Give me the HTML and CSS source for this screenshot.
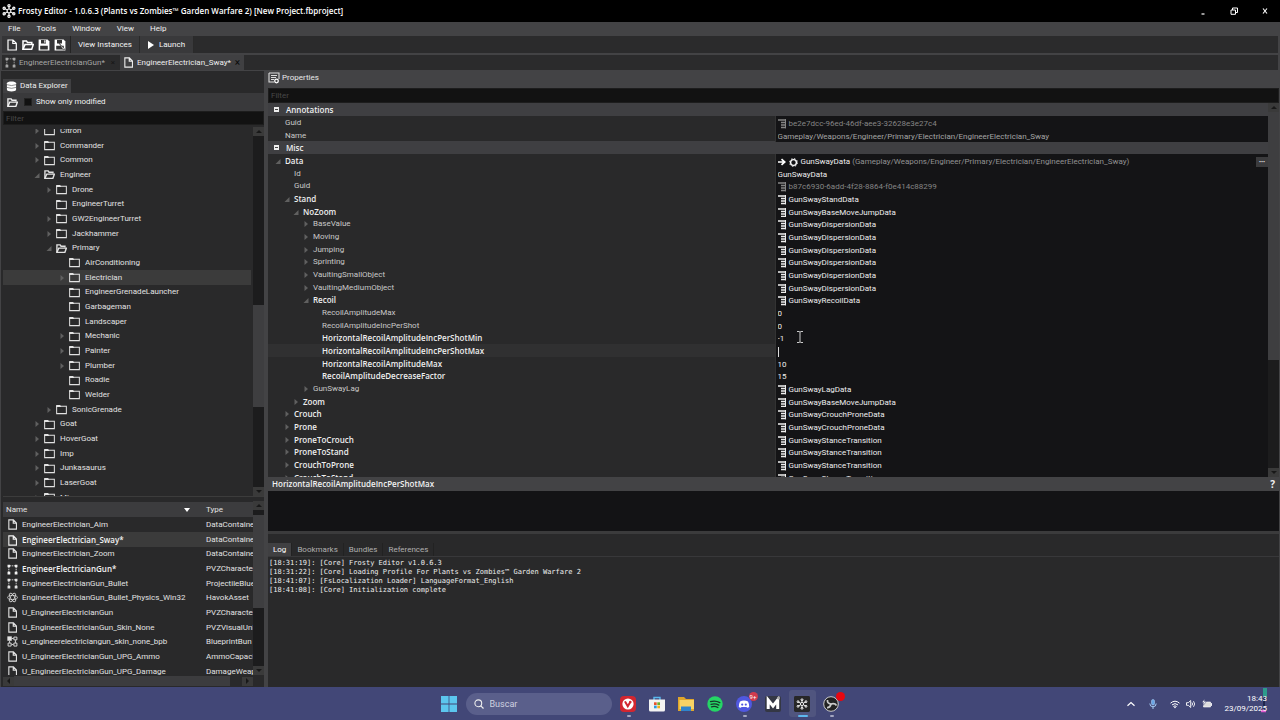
FILE: index.html
```html
<!DOCTYPE html>
<html lang="en">
<head>
<meta charset="utf-8">
<title>Frosty Editor</title>
<link rel="stylesheet" href="styles.css">
</head>
<body>
<svg class="defs" aria-hidden="true">
  <symbol id="snow" viewBox="0 0 16 16"><g fill="none" stroke="currentColor" stroke-width="1.200"><path d="M8 2v4M8 10v4M2.800 5l3.400 2M9.800 9l3.400 2M13.200 5l-3.400 2M6.200 9l-3.400 2"/><circle cx="8" cy="8" r="2.200"/></g><g fill="none" stroke="currentColor" stroke-width="1.300"><circle cx="8" cy="2" r="1.300"/><circle cx="8" cy="14" r="1.300"/><circle cx="2.500" cy="4.800" r="1.300"/><circle cx="13.500" cy="4.800" r="1.300"/><circle cx="2.500" cy="11.200" r="1.300"/><circle cx="13.500" cy="11.200" r="1.300"/></g></symbol>
  <symbol id="file" viewBox="0 0 12 12"><path d="M2 1h5l3.300 3.300V11H2zM6.800 1v3.500h3.500" fill="none" stroke="currentColor" stroke-width="1.200"/></symbol>
  <symbol id="folder" viewBox="0 0 12 12"><path d="M.7 2.500h10.600v8H.7z" fill="none" stroke="currentColor" stroke-width="1.100"/><path d="M.2 1.200h4.300l1.300 2H.2z" fill="currentColor"/></symbol>
  <symbol id="open" viewBox="0 0 12 12"><path d="M1 10V2h3.500l1 1.500h4.300V5" fill="none" stroke="currentColor" stroke-width="1.500"/><path d="M1 10.200l2-4.600h8.300l-1.600 4.600z" fill="none" stroke="currentColor" stroke-width="1.500"/></symbol>
  <symbol id="save" viewBox="0 0 12 12"><path d="M.6.600h9l1.800 1.800v9H.6z" fill="currentColor"/><path d="M3 1h5v3.500H3zM2.200 6.800h7.600v3.600H2.200z" fill="#333"/><path d="M6.300 1.300h1.200v2.500H6.300z" fill="currentColor"/></symbol>
  <symbol id="saveas" viewBox="0 0 12 12"><path d="M.6.600h9l1.800 1.800v9H.6z" fill="currentColor"/><path d="M3 1h5v3.500H3zM2.200 6.800h7.600v3.600H2.200z" fill="#333"/><path d="M5 4l6 6.500-2 .2z" fill="currentColor" stroke="#333" stroke-width=".6"/></symbol>
  <symbol id="nodes" viewBox="0 0 12 12"><path d="M2 3v6M10 3v6M3 2h6" stroke="currentColor" stroke-width=".9" stroke-dasharray="1.500 .7"/><path d="M.6.800h2.800v2.800H.6zM8.600.800h2.800v2.800H8.600zM.6 8.400h3v3h-3zM8.400 8.400h3v3h-3z" fill="currentColor"/></symbol>
  <symbol id="bundle" viewBox="0 0 12 12"><path d="M.4.400h4.800v4.800H.4z" fill="currentColor"/><path d="M7.500 1.200h3.300v3H7.500zM1.200 7.700h3.300v3.300H1.200zM7.500 7.700h3.300v3.300H7.500zM5.200 2.700h2M9.200 4.500v3M2.800 5.500v2M5 9.300h2" fill="none" stroke="currentColor"/></symbol>
  <symbol id="atom" viewBox="0 0 12 12"><g fill="none" stroke="currentColor" stroke-width=".8"><ellipse cx="6" cy="6" rx="5.400" ry="2.200"/><ellipse cx="6" cy="6" rx="5.400" ry="2.200" transform="rotate(60 6 6)"/><ellipse cx="6" cy="6" rx="5.400" ry="2.200" transform="rotate(120 6 6)"/></g></symbol>
  <symbol id="struct" viewBox="0 0 9 11"><path d="M0 1h8M3 3.500h5M3 6h5M3 8.500h5" stroke="currentColor" stroke-width="1.500"/><path d="M7.500 0v9.300" stroke="currentColor" stroke-width="1"/></symbol>
  <symbol id="right" viewBox="0 0 6 8"><path d="M1.500 1L5 4 1.500 7z" fill="currentColor"/></symbol>
  <symbol id="down" viewBox="0 0 6 8"><path d="M5.500 2v5H.5z" fill="currentColor"/></symbol>
</svg>

<header class="titlebar">
  <svg class="i14"><use href="#snow"/></svg>
  <h1>Frosty Editor - 1.0.6.3 (Plants vs Zombies™ Garden Warfare 2) [New Project.fbproject]</h1>
  <div class="winbtns">
    <button aria-label="Minimize"><svg viewBox="0 0 8 8"><path d="M2.500 7h3" stroke="#fff" stroke-width="1.200"/></svg></button>
    <button aria-label="Restore"><svg viewBox="0 0 8 8"><path d="M1 3h4.500v4.300H1zM2.500 3V1h5v4.500h-2" fill="none" stroke="#fff" stroke-width="1"/></svg></button>
    <button aria-label="Close"><svg viewBox="0 0 8 8"><path d="M2 1.500l4 5M6 1.500l-4 5" stroke="#fff" stroke-width="1.100"/></svg></button>
  </div>
</header>

<main class="app">
  <nav class="menubar"><button>File</button><button>Tools</button><button>Window</button><button>View</button><button>Help</button></nav>

  <div class="toolbar">
    <div class="tools">
      <button aria-label="New"><svg class="i12"><use href="#file"/></svg></button>
      <button aria-label="Open"><svg class="i12"><use href="#open"/></svg></button>
      <button aria-label="Save"><svg class="i12"><use href="#save"/></svg></button>
      <button aria-label="Save as"><svg class="i12"><use href="#saveas"/></svg></button>
    </div>
    <button class="tool wide">View Instances</button>
    <button class="tool launch"><svg class="play" viewBox="0 0 6 8"><path d="M0 0l6 4-6 4z" fill="#fff"/></svg>Launch</button>
  </div>

  <div class="doctabs">
    <div class="doctab"><svg class="i11"><use href="#nodes"/></svg><span>EngineerElectricianGun*</span><button aria-label="Close tab">×</button></div>
    <div class="doctab active"><svg class="i11"><use href="#file"/></svg><span>EngineerElectrician_Sway*</span><button aria-label="Close tab">×</button></div>
  </div>

  <div class="work">
    <aside class="left">
      <div class="paneltab"><svg class="i11" viewBox="0 0 12 12"><path d="M1 2.500C1 0 11 0 11 2.500v7C11 12 1 12 1 9.500z" fill="#fff"/><path d="M1 4q5 2 10 0M1 7q5 2 10 0" fill="none" stroke="#555" stroke-width=".7"/></svg>Data Explorer</div>
      <div class="opts">
        <svg class="i11"><use href="#open"/></svg>
        <label><input type="checkbox">Show only modified</label>
      </div>
      <input class="filter" placeholder="Filter" aria-label="Filter assets">
      <div class="treewrap">
        <div class="view">
          <ul class="tree">
            <li class="t0"><svg class="ar"><use href="#right"/></svg><svg class="i11"><use href="#folder"/></svg>Citron</li>
            <li class="t0"><svg class="ar"><use href="#right"/></svg><svg class="i11"><use href="#folder"/></svg>Commander</li>
            <li class="t0"><svg class="ar"><use href="#right"/></svg><svg class="i11"><use href="#folder"/></svg>Common</li>
            <li class="t0"><svg class="ar"><use href="#down"/></svg><svg class="i11"><use href="#open"/></svg>Engineer</li>
            <li class="t1"><svg class="ar"><use href="#right"/></svg><svg class="i11"><use href="#folder"/></svg>Drone</li>
            <li class="t1"><svg class="ar"></svg><svg class="i11"><use href="#folder"/></svg>EngineerTurret</li>
            <li class="t1"><svg class="ar"><use href="#right"/></svg><svg class="i11"><use href="#folder"/></svg>GW2EngineerTurret</li>
            <li class="t1"><svg class="ar"><use href="#right"/></svg><svg class="i11"><use href="#folder"/></svg>Jackhammer</li>
            <li class="t1"><svg class="ar"><use href="#down"/></svg><svg class="i11"><use href="#open"/></svg>Primary</li>
            <li class="t2"><svg class="ar"></svg><svg class="i11"><use href="#folder"/></svg>AirConditioning</li>
            <li class="t2 sel"><svg class="ar"><use href="#right"/></svg><svg class="i11"><use href="#folder"/></svg>Electrician</li>
            <li class="t2"><svg class="ar"></svg><svg class="i11"><use href="#folder"/></svg>EngineerGrenadeLauncher</li>
            <li class="t2"><svg class="ar"></svg><svg class="i11"><use href="#folder"/></svg>Garbageman</li>
            <li class="t2"><svg class="ar"></svg><svg class="i11"><use href="#folder"/></svg>Landscaper</li>
            <li class="t2"><svg class="ar"><use href="#right"/></svg><svg class="i11"><use href="#folder"/></svg>Mechanic</li>
            <li class="t2"><svg class="ar"><use href="#right"/></svg><svg class="i11"><use href="#folder"/></svg>Painter</li>
            <li class="t2"><svg class="ar"><use href="#right"/></svg><svg class="i11"><use href="#folder"/></svg>Plumber</li>
            <li class="t2"><svg class="ar"></svg><svg class="i11"><use href="#folder"/></svg>Roadie</li>
            <li class="t2"><svg class="ar"></svg><svg class="i11"><use href="#folder"/></svg>Welder</li>
            <li class="t1"><svg class="ar"><use href="#right"/></svg><svg class="i11"><use href="#folder"/></svg>SonicGrenade</li>
            <li class="t0"><svg class="ar"><use href="#right"/></svg><svg class="i11"><use href="#folder"/></svg>Goat</li>
            <li class="t0"><svg class="ar"><use href="#right"/></svg><svg class="i11"><use href="#folder"/></svg>HoverGoat</li>
            <li class="t0"><svg class="ar"><use href="#right"/></svg><svg class="i11"><use href="#folder"/></svg>Imp</li>
            <li class="t0"><svg class="ar"><use href="#right"/></svg><svg class="i11"><use href="#folder"/></svg>Junkasaurus</li>
            <li class="t0"><svg class="ar"><use href="#right"/></svg><svg class="i11"><use href="#folder"/></svg>LaserGoat</li>
            <li class="t0"><svg class="ar"><use href="#right"/></svg><svg class="i11"><use href="#folder"/></svg>Mi</li>
          </ul>
        </div>
        <div class="vbar"><i class="up"></i><div class="track treetrack"><b></b></div><i class="dn"></i></div>
      </div>
      <div class="listwrap">
        <div class="view">
          <table class="assets">
            <thead><tr><th>Name<svg class="sort" viewBox="0 0 6 4"><path d="M0 0h6L3 4z" fill="#fff"/></svg></th><th>Type</th></tr></thead>
            <tbody>
              <tr><td><svg class="i11"><use href="#file"/></svg>EngineerElectrician_Aim</td><td>DataContainer</td></tr>
              <tr class="sel"><td class="b"><svg class="i11"><use href="#file"/></svg>EngineerElectrician_Sway*</td><td>DataContainer</td></tr>
              <tr><td><svg class="i11"><use href="#file"/></svg>EngineerElectrician_Zoom</td><td>DataContainer</td></tr>
              <tr><td class="b"><svg class="i11"><use href="#nodes"/></svg>EngineerElectricianGun*</td><td>PVZCharacter</td></tr>
              <tr><td><svg class="i11"><use href="#nodes"/></svg>EngineerElectricianGun_Bullet</td><td>ProjectileBlue</td></tr>
              <tr><td><svg class="i11"><use href="#atom"/></svg>EngineerElectricianGun_Bullet_Physics_Win32</td><td>HavokAsset</td></tr>
              <tr><td><svg class="i11"><use href="#file"/></svg>U_EngineerElectricianGun</td><td>PVZCharacter</td></tr>
              <tr><td><svg class="i11"><use href="#file"/></svg>U_EngineerElectricianGun_Skin_None</td><td>PVZVisualUnl</td></tr>
              <tr><td><svg class="i11"><use href="#bundle"/></svg>u_engineerelectriciangun_skin_none_bpb</td><td>BlueprintBun</td></tr>
              <tr><td><svg class="i11"><use href="#file"/></svg>U_EngineerElectricianGun_UPG_Ammo</td><td>AmmoCapaci</td></tr>
              <tr><td><svg class="i11"><use href="#file"/></svg>U_EngineerElectricianGun_UPG_Damage</td><td>DamageWeap</td></tr>
            </tbody>
          </table>
        </div>
        <div class="vbar"><i class="up"></i><div class="track listtrack"><b></b></div><i class="dn"></i></div>
      </div>
      <div class="hbar"><i class="lt"></i><b></b><i class="rt"></i></div>
    </aside>

    <section class="right">
      <h2 class="prophead"><svg class="i12" viewBox="0 0 12 12"><path d="M1 1h10v6M1 1v9h5M3 3.500h6M3 5.500h5M3 7.500h3" fill="none" stroke="#ddd" stroke-width="1.100"/><circle cx="8.500" cy="9" r="1.800" fill="none" stroke="#fff" stroke-width="1.300"/></svg>Properties</h2>
      <input class="filter" placeholder="Filter" aria-label="Filter properties">
      <div class="propwrap">
        <div class="view">
          <div class="props">
            <div class="row cat"><span class="box"></span><span>Annotations</span></div>
            <div class="row"><label class="p0"><svg class="ar"></svg>Guid</label><div class="val dim"><svg class="st"><use href="#struct"/></svg>be2e7dcc-96ed-46df-aee3-32628e3e27c4</div></div>
            <div class="row"><label class="p0" for="name"><svg class="ar"></svg>Name</label><div class="val soft"><input id="name" value="Gameplay/Weapons/Engineer/Primary/Electrician/EngineerElectrician_Sway"></div></div>
            <div class="row cat"><span class="box"></span><span>Misc</span></div>
            <div class="row b"><label class="p0"><svg class="ar"><use href="#down"/></svg>Data</label><div class="val ref"><svg class="i8" viewBox="0 0 8 8"><path d="M0 4h6M3.500 1.200L6.800 4 3.500 6.800" fill="none" stroke="#fff" stroke-width="1.700"/></svg><svg class="i9" viewBox="0 0 10 10"><circle cx="5" cy="5" r="3.200" fill="none" stroke="#fff" stroke-width="1.500"/><circle cx="5" cy="5" r="4.400" fill="none" stroke="#fff" stroke-width="1" stroke-dasharray="1.700 1.750"/></svg><span>GunSwayData <em>(Gameplay/Weapons/Engineer/Primary/Electrician/EngineerElectrician_Sway)</em></span><button class="more" aria-label="More">•••</button></div></div>
            <div class="row"><label class="p1" for="pid"><svg class="ar"></svg>Id</label><div class="val"><input id="pid" value="GunSwayData"></div></div>
            <div class="row"><label class="p1"><svg class="ar"></svg>Guid</label><div class="val dim"><svg class="st"><use href="#struct"/></svg>b87c6930-6add-4f28-8864-f0e414c88299</div></div>
            <div class="row b"><label class="p1"><svg class="ar"><use href="#down"/></svg>Stand</label><div class="val"><svg class="st"><use href="#struct"/></svg>GunSwayStandData</div></div>
            <div class="row b"><label class="p2"><svg class="ar"><use href="#down"/></svg>NoZoom</label><div class="val"><svg class="st"><use href="#struct"/></svg>GunSwayBaseMoveJumpData</div></div>
            <div class="row"><label class="p3"><svg class="ar"><use href="#right"/></svg>BaseValue</label><div class="val"><svg class="st"><use href="#struct"/></svg>GunSwayDispersionData</div></div>
            <div class="row"><label class="p3"><svg class="ar"><use href="#right"/></svg>Moving</label><div class="val"><svg class="st"><use href="#struct"/></svg>GunSwayDispersionData</div></div>
            <div class="row"><label class="p3"><svg class="ar"><use href="#right"/></svg>Jumping</label><div class="val"><svg class="st"><use href="#struct"/></svg>GunSwayDispersionData</div></div>
            <div class="row"><label class="p3"><svg class="ar"><use href="#right"/></svg>Sprinting</label><div class="val"><svg class="st"><use href="#struct"/></svg>GunSwayDispersionData</div></div>
            <div class="row"><label class="p3"><svg class="ar"><use href="#right"/></svg>VaultingSmallObject</label><div class="val"><svg class="st"><use href="#struct"/></svg>GunSwayDispersionData</div></div>
            <div class="row"><label class="p3"><svg class="ar"><use href="#right"/></svg>VaultingMediumObject</label><div class="val"><svg class="st"><use href="#struct"/></svg>GunSwayDispersionData</div></div>
            <div class="row b"><label class="p3"><svg class="ar"><use href="#down"/></svg>Recoil</label><div class="val"><svg class="st"><use href="#struct"/></svg>GunSwayRecoilData</div></div>
            <div class="row"><label class="p4" for="r1"><svg class="ar"></svg>RecoilAmplitudeMax</label><div class="val"><input id="r1" value="0"></div></div>
            <div class="row"><label class="p4" for="r2"><svg class="ar"></svg>RecoilAmplitudeIncPerShot</label><div class="val"><input id="r2" value="0"></div></div>
            <div class="row b"><label class="p4" for="r3"><svg class="ar"></svg>HorizontalRecoilAmplitudeIncPerShotMin</label><div class="val"><input id="r3" value="-1"><svg class="ibeam" viewBox="0 0 8 14"><path d="M1 1.500h2.200L4 2.200l.8-.7H7M1 12.500h2.200l.8-.7.800.700H7M4 2v10" fill="none" stroke="#ccc"/></svg></div></div>
            <div class="row b cur"><label class="p4" for="r4"><svg class="ar"></svg>HorizontalRecoilAmplitudeIncPerShotMax</label><div class="val"><span class="caret"></span><input id="r4" value=""></div></div>
            <div class="row b"><label class="p4" for="r5"><svg class="ar"></svg>HorizontalRecoilAmplitudeMax</label><div class="val"><input id="r5" value="10"></div></div>
            <div class="row b"><label class="p4" for="r6"><svg class="ar"></svg>RecoilAmplitudeDecreaseFactor</label><div class="val"><input id="r6" value="15"></div></div>
            <div class="row"><label class="p3"><svg class="ar"><use href="#right"/></svg>GunSwayLag</label><div class="val"><svg class="st"><use href="#struct"/></svg>GunSwayLagData</div></div>
            <div class="row b"><label class="p2"><svg class="ar"><use href="#right"/></svg>Zoom</label><div class="val"><svg class="st"><use href="#struct"/></svg>GunSwayBaseMoveJumpData</div></div>
            <div class="row b"><label class="p1"><svg class="ar"><use href="#right"/></svg>Crouch</label><div class="val"><svg class="st"><use href="#struct"/></svg>GunSwayCrouchProneData</div></div>
            <div class="row b"><label class="p1"><svg class="ar"><use href="#right"/></svg>Prone</label><div class="val"><svg class="st"><use href="#struct"/></svg>GunSwayCrouchProneData</div></div>
            <div class="row b"><label class="p1"><svg class="ar"><use href="#right"/></svg>ProneToCrouch</label><div class="val"><svg class="st"><use href="#struct"/></svg>GunSwayStanceTransition</div></div>
            <div class="row b"><label class="p1"><svg class="ar"><use href="#right"/></svg>ProneToStand</label><div class="val"><svg class="st"><use href="#struct"/></svg>GunSwayStanceTransition</div></div>
            <div class="row b"><label class="p1"><svg class="ar"><use href="#right"/></svg>CrouchToProne</label><div class="val"><svg class="st"><use href="#struct"/></svg>GunSwayStanceTransition</div></div>
            <div class="row b"><label class="p1"><svg class="ar"><use href="#right"/></svg>CrouchToStand</label><div class="val"><svg class="st"><use href="#struct"/></svg>GunSwayStanceTransition</div></div>
          </div>
        </div>
        <div class="vbar"><i class="up"></i><div class="track proptrack"><b></b></div><i class="dn"></i></div>
      </div>
      <div class="helphead"><span>HorizontalRecoilAmplitudeIncPerShotMax</span><button aria-label="Help">?</button></div>
      <div class="helpbody"></div>
      <div class="logtabs"><button class="on">Log</button><button>Bookmarks</button><button>Bundles</button><button>References</button></div>
      <pre class="log">[18:31:19]: [Core] Frosty Editor v1.0.6.3
[18:31:22]: [Core] Loading Profile For Plants vs Zombies™ Garden Warfare 2
[18:41:07]: [FsLocalization Loader] LanguageFormat_English
[18:41:08]: [Core] Initialization complete</pre>
    </section>
  </div>
</main>

<footer class="taskbar">
  <div class="apps">
    <button aria-label="Start"><svg class="i16" viewBox="0 0 16 16"><path d="M0 0h7.600v7.600H0zM8.400 0H16v7.600H8.400zM0 8.400h7.600V16H0zM8.400 8.400H16V16H8.400z" fill="#5cc6ee"/></svg></button>
    <label class="search"><svg class="i10" viewBox="0 0 10 10"><circle cx="4.300" cy="4.300" r="3.400" fill="none" stroke="#eee" stroke-width="1.100"/><path d="M6.800 6.800l2.700 2.700" stroke="#eee" stroke-width="1.200"/></svg><input placeholder="Buscar" aria-label="Buscar"></label>
    <button class="run" aria-label="Vivaldi"><svg class="i16" viewBox="0 0 16 16"><rect width="16" height="16" rx="4" fill="#d22630"/><circle cx="8" cy="8" r="5.600" fill="#fff"/><path d="M5.300 6l2.500 4.300L10 6.500" fill="none" stroke="#d22630" stroke-width="2" stroke-linecap="round"/><circle cx="10.300" cy="6" r="1.300" fill="#d22630"/></svg></button>
    <button aria-label="Store"><svg class="i16" viewBox="0 0 16 16"><path d="M5 4V1.500h6V4" fill="none" stroke="#59b8ee" stroke-width="1.400"/><path d="M0 3.500h16V14q0 1.500-1.500 1.500h-13Q0 15.500 0 14z" fill="#f3f3f3"/><path d="M5 6.300h2.700V9H5z" fill="#e8522c"/><path d="M8.300 6.300H11V9H8.300z" fill="#6fae2b"/><path d="M5 9.600h2.700v2.700H5z" fill="#2a9be0"/><path d="M8.300 9.600H11v2.700H8.300z" fill="#f2b21e"/></svg></button>
    <button aria-label="Files"><svg class="i16" viewBox="0 0 16 16"><path d="M0 1h6l2 2h8v12H0z" fill="#dfa52b"/><path d="M1.500 4H16v9H1.500z" fill="#f7d265"/><path d="M3 10.500h10V15H3z" fill="#2f84cc"/></svg></button>
    <button aria-label="Spotify"><svg class="i16" viewBox="0 0 16 16"><circle cx="8" cy="8" r="7.700" fill="#25d565"/><path d="M3.500 5.600q5-1.500 9.300 1M4 8.300q4.300-1.200 7.800.8M4.500 10.800q3.500-1 6.400.7" fill="none" stroke="#17352a" stroke-width="1.300" stroke-linecap="round"/></svg></button>
    <button class="run" aria-label="Discord"><svg class="i16" viewBox="0 0 16 16"><circle cx="8" cy="8" r="8" fill="#5058e0"/><path d="M4 5.500q4-1.800 8 0 1.500 3 1.200 5.500-2 1.300-2.700 0h-5q-.7 1.300-2.700 0Q2.600 8.500 4 5.500z" fill="#fff"/><circle cx="6.200" cy="8.600" r="1.100" fill="#5058e0"/><circle cx="9.800" cy="8.600" r="1.100" fill="#5058e0"/></svg><span class="badge">9+</span></button>
    <button aria-label="Modrinth"><svg class="i16" viewBox="0 0 16 16"><rect width="16" height="16" rx="2" fill="#343744"/><path d="M3.200 13V4L8 10l4.700-6v9" fill="none" stroke="#fff" stroke-width="3"/><circle cx="13.500" cy="2" r="1.500" fill="#aaa"/></svg></button>
    <button class="run here" aria-label="Frosty Editor"><svg class="i16" viewBox="0 0 22 22"><rect width="22" height="22" rx="2" fill="#272727"/><use href="#snow" x="3" y="3" width="16" height="16"/></svg></button>
    <button class="run" aria-label="OBS"><svg class="i16" viewBox="0 0 16 16"><circle cx="8" cy="8" r="7.300" fill="#222" stroke="#ccc" stroke-width="1"/><path d="M8 8Q4 7.500 4.500 4M8 8q4-1 5.500 1.500M8 8q-1 4-4 3.700" fill="none" stroke="#ccc" stroke-width="1.700"/></svg><span class="badge dot"></span></button>
  </div>
  <div class="tray">
    <svg class="glint" viewBox="0 0 10 26"><path d="M4 0h4v9H4z" fill="#2d9b8c"/><path d="M5 8v14" stroke="#151b3c" stroke-width="1.500"/><path d="M2 23h5" stroke="#e05bd0" stroke-width="2.500"/></svg>
    <svg class="i10" viewBox="0 0 10 10"><path d="M1.500 6.800L5 3.500l3.500 3.300" fill="none" stroke="#fff" stroke-width="1.200"/></svg>
    <svg class="i10 mic" viewBox="0 0 10 10"><rect x="3.500" y=".5" width="3" height="5.500" rx="1.500" fill="#6aa5e6" stroke="#a6cbf4" stroke-width=".6"/><path d="M1.800 4.500q0 3.300 3.200 3.300t3.200-3.300M5 7.800V10" fill="none" stroke="#a6cbf4"/></svg>
    <svg class="i10" viewBox="0 0 10 10"><path d="M.5 4.200q4.500-4 9 0M2 5.900q3-2.600 6 0M3.400 7.500q1.600-1.300 3.200 0" fill="none" stroke="#fff" stroke-width="1"/><circle cx="5" cy="8.500" r=".8" fill="#fff"/></svg>
    <svg class="i10" viewBox="0 0 10 10"><path d="M.5 3.700h1.800L4.700 1.500v7L2.300 6.300H.5zM6 3.500q1.200 1.500 0 3M7.500 2.200q2.300 2.800 0 5.600" fill="none" stroke="#fff" stroke-width=".9"/></svg>
    <svg class="i10" viewBox="0 0 10 10"><path d="M1.500 3h7v5h-7zM9 4.500h1v2H9z" fill="#ddd" stroke="#fff" stroke-width=".6"/><path d="M2.500 0L0 3.500h2L1 6.500l3.500-4h-2z" fill="#fff" stroke="#424777" stroke-width=".5"/></svg>
    <time>18:43<br>23/09/2025</time>
  </div>
</footer>
</body>
</html>
```

FILE: styles.css
```css
* { box-sizing: border-box; }
body { margin: 0; height: 100vh; display: flex; flex-direction: column; overflow: hidden; background: #2a2a2a; color: #dedede; font: 8px/12px Roboto, "Open Sans", sans-serif; }
button, input { font: inherit; color: inherit; background: none; border: 0; padding: 0; margin: 0; outline: 0; }
button { display: flex; align-items: center; justify-content: center; white-space: nowrap; }
h1, h2, ul, pre { margin: 0; padding: 0; }
svg { flex: none; display: block; }
.defs { position: absolute; width: 0; height: 0; }
.i8 { width: 8px; height: 8px; }
.i9 { width: 9px; height: 9px; }
.i10 { width: 10px; height: 10px; }
.i11 { width: 11px; height: 11px; }
.i12 { width: 12px; height: 12px; }
.i14 { width: 14px; height: 14px; }
.i16 { width: 16px; height: 16px; }

.titlebar { flex: none; height: 22px; background: #000; color: #fff; display: flex; align-items: center; padding: 0 7px 0 2px; gap: 2px; }
.titlebar h1 { font: 600 8px/12px "Open Sans", sans-serif; flex: 1; white-space: nowrap; }
.winbtns { display: flex; gap: 15px; }
.winbtns button { width: 16px; height: 16px; }
.winbtns svg { width: 8px; height: 8px; }

.app { flex: 1; min-height: 0; display: flex; flex-direction: column; background: #434345; color: #e2e2e2; }
.menubar { flex: none; height: 14px; display: flex; padding-left: 8px; gap: 16px; color: #f0f0f0; }
.toolbar { flex: none; height: 17px; margin: 0 2px; background: #2b2b2c; display: flex; }
.tools { display: flex; gap: 4px; padding: 0 4px; background: #353537; border-right: 1px solid #242424; color: #fff; }
.tool { background: #39393b; border-right: 1px solid #2a2a2a; color: #f4f4f4; }
.wide { width: 69px; }
.launch { width: 54px; gap: 5px; }
.play { width: 6px; height: 8px; }
.doctabs { flex: none; height: 15px; margin: 2px 2px 0; background: #2b2b2c; display: flex; }
.doctab { width: 118px; display: flex; align-items: center; gap: 3px; padding: 0 3px; color: #a5a5a5; }
.doctab span { flex: 1; white-space: nowrap; }
.doctab button { width: 8px; color: #161616; }
.doctab.active { width: 124px; background: #404042; color: #eee; }
.doctab.active button { color: #090909; font-size: 10px; }

.work { flex: 1; min-height: 0; display: grid; grid-template-columns: 263px 1fr; column-gap: 4px; padding: 0 1px; }
.left { min-height: 0; display: flex; flex-direction: column; background: #29292a; padding: 8px 0 0 2px; margin-top: 1px; }
.paneltab { flex: none; align-self: flex-start; width: 68px; height: 14px; background: #404042; display: flex; align-items: center; gap: 3px; padding-left: 3px; white-space: nowrap; color: #eee; }
.opts { flex: none; height: 18px; background: #39393b; display: flex; align-items: center; gap: 6px; padding-left: 4px; color: #f0f0f0; }
.opts label { display: flex; align-items: center; gap: 4px; }
.opts input { appearance: none; width: 8px; height: 8px; background: #111; border: 1px solid #222; }
.filter { flex: none; height: 14px; background: #121212; border: 1px solid #1d1d1d; padding: 0 2px; width: 100%; }
.filter::placeholder { color: #484848; opacity: 1; }
.view { flex: 1; min-width: 0; overflow: hidden; }
.treewrap { flex: 1; min-height: 0; display: flex; padding-top: 2px; border-bottom: 1px solid #3c3c3c; }
.treewrap .view { margin-top: 2px; }
.tree { list-style: none; margin: -6px 2px 0 0; }
.tree li { height: 15px; display: flex; align-items: center; white-space: nowrap; }
.tree li:nth-child(3n) { height: 14px; }
.ar { width: 6px; height: 8px; color: #606060; margin-right: 4px; }
.tree .i11 { margin-right: 5px; }
.t0 { padding-left: 31px; }
.t1 { padding-left: 43px; }
.t2 { padding-left: 56px; }
.sel { background: #3b3b3b; }

.vbar { flex: none; width: 11px; display: flex; flex-direction: column; background: #1c1c1d; }
.vbar i, .hbar i { flex: none; width: 11px; height: 9px; background: #3a3a3a; display: flex; align-items: center; justify-content: center; }
.vbar i::after, .hbar i::after { content: ""; border: 3px solid transparent; }
.up::after { border-bottom-color: #181818 !important; border-top: 0 !important; }
.dn::after { border-top-color: #181818 !important; border-bottom: 0 !important; }
.lt::after { border-right-color: #181818 !important; border-left: 0 !important; }
.rt::after { border-left-color: #181818 !important; border-right: 0 !important; }
.track { flex: 1; display: grid; }
.track b { grid-row: 2; background: #3e3e40; }
.treetrack { grid-template-rows: 169fr 101fr 80fr; }
.listtrack { grid-template-rows: 5fr 94fr 58fr; }
.proptrack { grid-template-rows: 0fr 247fr 108fr; }

.listwrap { flex: none; height: 174px; display: flex; margin-top: 4px; }
.listwrap .view { padding-top: 1px; }
.assets { border-collapse: collapse; table-layout: fixed; width: 100%; }
.assets th { height: 15px; background: #3c3c3e; text-align: left; font-weight: 400; padding: 0 3px; }
.assets th:first-child { width: 200px; }
.sort { width: 6px; height: 4px; float: right; margin: 4px 10px 0 0; }
.assets td { height: 15px; padding: 0 1px 0 3px; white-space: nowrap; overflow: hidden; line-height: 14px; }
.assets td:nth-child(2) { padding-left: 3px; }
.assets tr:nth-child(3n) td { height: 14px; }
.assets td .i11 { display: inline-block; vertical-align: middle; margin: 0 4px 0 1px; }
.b, .b label, .cat, .helphead { font-family: "Open Sans", sans-serif; font-weight: 600; color: #f2f2f2; }
.hbar { flex: none; height: 12px; display: flex; align-items: center; padding-right: 11px; background: #29292a; }
.hbar b { width: 216px; height: 10px; background: #3c3c3e; margin-right: auto; }

.right { min-width: 0; min-height: 0; display: flex; flex-direction: column; background: #29292a; }
.prophead { flex: none; height: 18px; background: #434345; font-size: 8px; font-weight: 400; display: flex; align-items: center; gap: 2px; padding-bottom: 2px; color: #e8e8e8; }
.right > .filter { height: 15px; }
.propwrap { flex: 1; min-height: 0; display: flex; }
.row { height: 13px; display: grid; grid-template-columns: 507fr 492fr; }
.row:nth-child(3n) { height: 12px; }
.row label { display: flex; align-items: center; white-space: nowrap; color: #c8c8c8; border-right: 1px solid #333; }
.row.b label { color: #eee; }
.row.cat { display: flex; align-items: center; background: #3f3f42; gap: 7px; padding-left: 6px; color: #eee; }
.box { width: 5px; height: 5px; border: solid #eee; border-width: 2px 1px; background: #444; }
.p0 { padding-left: 7px; }
.p1 { padding-left: 16px; }
.p2 { padding-left: 25px; }
.p3 { padding-left: 35px; }
.p4 { padding-left: 44px; }
.val { position: relative; min-width: 0; background: #141416; padding: 2px 0 0 2px; display: flex; align-items: center; font-family: Roboto, sans-serif; font-weight: 400; white-space: nowrap; color: #eee; }
.val input { width: 100%; height: 11px; }
.st { width: 9px; height: 11px; margin-right: 2px; }
.val.dim { color: #858585; }
.val.soft { color: #a4a4a4; }
.ref { gap: 3px; }
.ref em { font-style: normal; color: #929292; }
.more { margin-left: auto; width: 12px; height: 11px; background: #3b3b3d; font-size: 6px; }
.cur label { background: #303031; }
.caret { flex: none; width: 1px; height: 10px; background: #ddd; }
.ibeam { position: absolute; left: 20px; top: -1px; width: 8px; height: 14px; }
.helphead { flex: none; height: 14px; background: #434345; display: flex; align-items: center; justify-content: space-between; padding: 0 4px; }
.helphead button { font-size: 10px; font-weight: 700; }
.helpbody { flex: none; height: 43px; background: #131315; border-bottom: 3px solid #3b3b3c; }
.logtabs { flex: none; height: 23px; padding: 9px 0 0; display: flex; border-bottom: 1px solid #38383a; color: #b0b0b0; }
.logtabs button { padding: 0 5px; border-right: 1px solid #222; }
.logtabs .on { background: #404042; color: #fff; }
.log { flex: none; height: 130px; padding: 2px 1px; font: 7px/9px "DejaVu Sans Mono", monospace; color: #eee; }

.taskbar { flex: none; height: 33px; background: #424777; display: grid; grid-template-columns: 1fr auto 1fr; align-items: center; }
.apps { grid-column: 2; display: flex; align-items: center; gap: 2px; }
.apps button { position: relative; width: 27px; height: 27px; }
.search { width: 146px; height: 22px; margin: 0 1px; border-radius: 11px; background: #5a5f8b; display: flex; align-items: center; gap: 6px; padding: 0 8px; }
.search input { width: 80px; font-size: 9px; }
.search input::placeholder { color: #d0d2e0; opacity: 1; }
.run::after { content: ""; position: absolute; bottom: 0; left: 12px; width: 4px; height: 2px; border-radius: 1px; background: #a3a6c0; }
.here { background: #50557f; border-radius: 3px; color: #fff; }
.here::after { left: 9px; width: 10px; background: #5db8ee; }
.badge { position: absolute; right: 0; top: 2px; width: 9px; height: 9px; border-radius: 5px; background: #d03b4e; color: #fff; font-size: 6px; line-height: 9px; text-align: center; }
.dot { background: #e80710; }
.tray { position: relative; display: flex; align-items: center; justify-content: flex-end; gap: 6px; padding-right: 13px; color: #fff; }
.tray time { position: relative; text-align: right; line-height: 10px; margin-left: 6px; }
.mic { margin: 0 6px; }
.glint { position: absolute; right: 11px; top: -6px; width: 10px; height: 26px; }
```
